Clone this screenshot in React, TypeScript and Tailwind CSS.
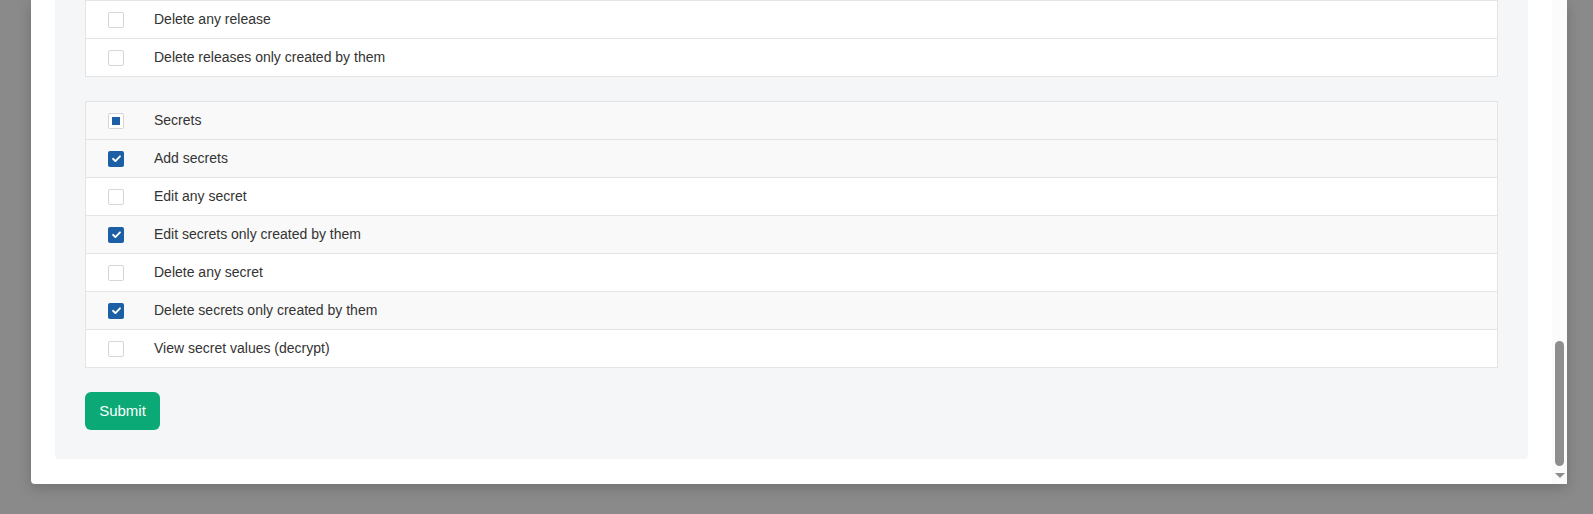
import React from "react";

type Perm = { label: string; state: "on" | "off" | "mixed"; header?: boolean };

const releases: Perm[] = [
  { label: "Delete any release", state: "off" },
  { label: "Delete releases only created by them", state: "off" },
];

const secrets: Perm[] = [
  { label: "Secrets", state: "mixed", header: true },
  { label: "Add secrets", state: "on" },
  { label: "Edit any secret", state: "off" },
  { label: "Edit secrets only created by them", state: "on" },
  { label: "Delete any secret", state: "off" },
  { label: "Delete secrets only created by them", state: "on" },
  { label: "View secret values (decrypt)", state: "off" },
];

function Checkbox({ state }: { state: Perm["state"] }) {
  if (state === "on") {
    return (
      <span className="flex h-4 w-4 items-center justify-center rounded-[2px] bg-[#1d5fa5]">
        <svg width="11" height="11" viewBox="0 0 12 12" fill="none">
          <path d="M2.2 6.3 4.8 8.8 9.8 3.6" stroke="#fff" strokeWidth="2" strokeLinecap="round" strokeLinejoin="round" />
        </svg>
      </span>
    );
  }
  return (
    <span className="flex h-4 w-4 items-center justify-center rounded-[2px] border border-[#d6d6d6] bg-white">
      {state === "mixed" && <span className="h-2 w-2 bg-[#1d5fa5]" />}
    </span>
  );
}

// continued = the table's head is scrolled off above, so every row draws its own top rule
function PermTable({ rows, continued }: { rows: Perm[]; continued?: boolean }) {
  return (
    <div className={`border-x border-b border-[#e4e4e4] bg-white ${continued ? "" : "border-t"}`}>
      {rows.map((r, i) => (
        <div
          key={r.label}
          className={`flex items-center ${i > 0 || continued ? "h-[38px] border-t border-[#e4e4e4]" : "h-[37px]"} ${
            r.header || r.state === "on" ? "bg-[#f9f9f9]" : "bg-white"
          }`}
        >
          <div className="w-[68px] pl-[22px]">
            <Checkbox state={r.state} />
          </div>
          <span className="text-[14px] text-[#333]">{r.label}</span>
        </div>
      ))}
    </div>
  );
}

export default function App() {
  return (
    <div
      className="flex h-[514px] flex-col justify-end overflow-hidden bg-[#8a8a8a] pb-[30px] pl-[31px] pr-[26px]"
      style={{ fontFamily: '"Liberation Sans", Arial, sans-serif' }}
    >
      <div className="flex rounded-b-[4px] bg-white shadow-[0_4px_14px_rgba(0,0,0,0.18)]">
        <div className="flex-1 px-6 pb-[25px]">
          <div className="flex flex-col gap-6 rounded-b-[4px] bg-[#f5f6f8] px-[30px] pb-[29px]">
            <PermTable rows={releases} continued />
            <PermTable rows={secrets} />
            <div>
              <button className="h-[38px] w-[75px] rounded-[6px] bg-[#0aa975] text-[15px] text-white">
                Submit
              </button>
            </div>
          </div>
        </div>
        <div className="flex w-[15px] flex-col justify-end bg-[#fbfbfb]">
          <div className="mx-[3px] h-[125px] rounded-full bg-[#8e8e8e]" />
          <div className="flex h-[18px] items-center justify-center">
            <span className="h-0 w-0 border-x-[5px] border-t-[5px] border-x-transparent border-t-[#8e8e8e]" />
          </div>
        </div>
      </div>
    </div>
  );
}
